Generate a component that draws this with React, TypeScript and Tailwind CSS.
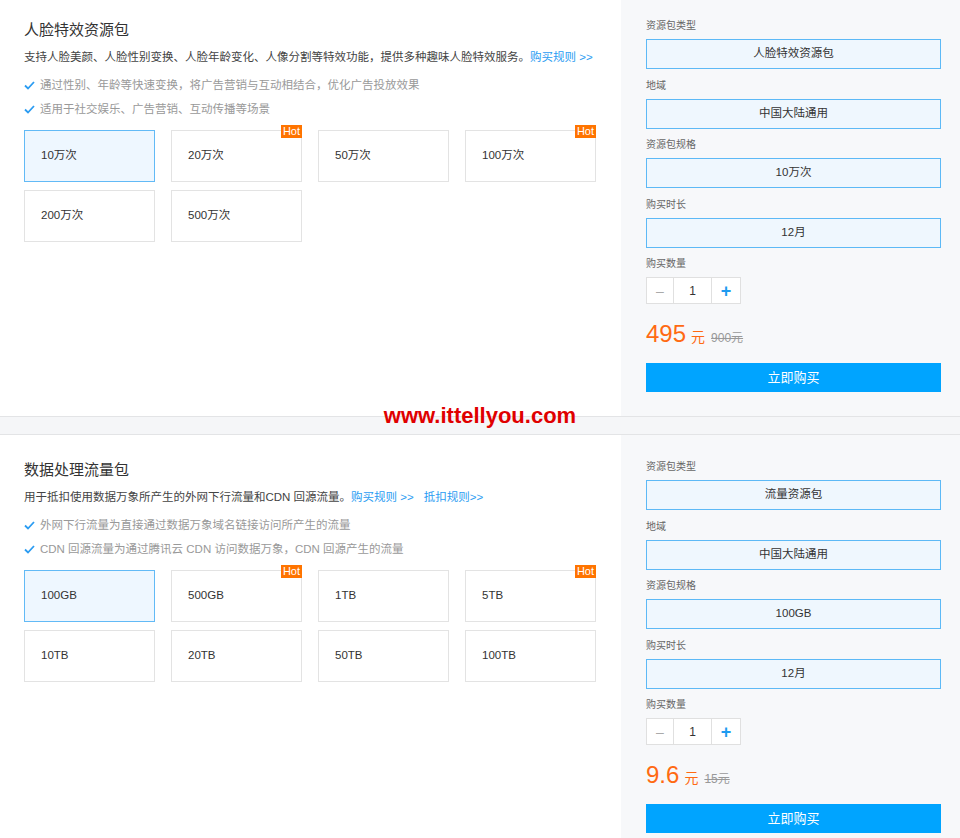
import { Fragment } from "react";

const FONT = { fontFamily: '"Liberation Sans", "Noto Sans CJK SC", sans-serif' };

type Pack = {
  title: string;
  desc: string;
  links: string[];
  points: string[];
  options: { label: string; hot?: boolean }[];
  type: string;
  spec: string;
  price: string;
  origin: string;
};

const PACKS: Pack[] = [
  {
    title: "人脸特效资源包",
    desc: "支持人脸美颜、人脸性别变换、人脸年龄变化、人像分割等特效功能，提供多种趣味人脸特效服务。",
    links: ["购买规则 >>"],
    points: [
      "通过性别、年龄等快速变换，将广告营销与互动相结合，优化广告投放效果",
      "适用于社交娱乐、广告营销、互动传播等场景",
    ],
    options: [
      { label: "10万次" },
      { label: "20万次", hot: true },
      { label: "50万次" },
      { label: "100万次", hot: true },
      { label: "200万次" },
      { label: "500万次" },
    ],
    type: "人脸特效资源包",
    spec: "10万次",
    price: "495",
    origin: "900元",
  },
  {
    title: "数据处理流量包",
    desc: "用于抵扣使用数据万象所产生的外网下行流量和CDN 回源流量。",
    links: ["购买规则 >>", "抵扣规则>>"],
    points: [
      "外网下行流量为直接通过数据万象域名链接访问所产生的流量",
      "CDN 回源流量为通过腾讯云 CDN 访问数据万象，CDN 回源产生的流量",
    ],
    options: [
      { label: "100GB" },
      { label: "500GB", hot: true },
      { label: "1TB" },
      { label: "5TB", hot: true },
      { label: "10TB" },
      { label: "20TB" },
      { label: "50TB" },
      { label: "100TB" },
    ],
    type: "流量资源包",
    spec: "100GB",
    price: "9.6",
    origin: "15元",
  },
];

function Check() {
  return (
    <svg width="11" height="9" viewBox="0 0 11 9" className="mr-[5px] shrink-0">
      <path d="M1 4.5 L4 7.5 L10 1" fill="none" stroke="#2b9cf2" strokeWidth="1.8" />
    </svg>
  );
}

function Field({ label, value }: { label: string; value: string }) {
  return (
    <div className="mb-[9.5px]">
      <div className="h-[14px] text-[10px] leading-[14px] text-[#666]">{label}</div>
      <div className="mt-[6px] flex h-[30px] items-center justify-center border border-[#5db9f6] bg-[#eff7fe] text-[11.5px] text-[#333]">
        {value}
      </div>
    </div>
  );
}

function Section({ pack, first }: { pack: Pack; first: boolean }) {
  return (
    <section className={first ? "flex h-[416px]" : "flex h-[403px]"}>
      <div className={first ? "flex-1 bg-white pl-6 pt-5" : "flex-1 bg-white pl-6 pt-[25px]"}>
        <h2 className="text-[15px] leading-5 text-[#333]">{pack.title}</h2>
        <p className="mt-2 text-[11.5px] leading-[18px] text-[#444]">
          {pack.desc}
          {pack.links.map((l, i) => (
            <Fragment key={l}>
              <span className="text-[#2b9cf2]">{l}</span>
              {i < pack.links.length - 1 && <span className="inline-block w-[10px]" />}
            </Fragment>
          ))}
        </p>
        <div className="mt-[10px] flex flex-col gap-[6px]">
          {pack.points.map((p) => (
            <div key={p} className="flex items-center text-[11.5px] leading-[18px] text-[#999]">
              <Check />
              {p}
            </div>
          ))}
        </div>
        <div className="mt-3 grid w-[572px] grid-cols-4 gap-x-4 gap-y-2">
          {pack.options.map((o, i) => (
            <div
              key={o.label}
              className={
                i === 0
                  ? "relative flex h-[52px] items-center border border-[#62baf6] bg-[#eef7ff] pl-4 text-[11.5px] text-[#333]"
                  : "relative flex h-[52px] items-center border border-[#e3e3e3] bg-white pl-4 text-[11.5px] text-[#333]"
              }
            >
              {o.label}
              {o.hot && (
                <span className="absolute -right-px top-[-6px] bg-[#ff7400] px-[2px] text-[11px] leading-[13px] text-white">
                  Hot
                </span>
              )}
            </div>
          ))}
        </div>
      </div>
      <div className={first ? "w-[339px] bg-[#f7f8fa] pl-[25px] pr-[19px] pt-[19px]" : "w-[339px] bg-[#f7f8fa] pl-[25px] pr-[19px] pt-[25px]"}>
        <Field label="资源包类型" value={pack.type} />
        <Field label="地域" value="中国大陆通用" />
        <Field label="资源包规格" value={pack.spec} />
        <Field label="购买时长" value="12月" />
        <div className="h-[14px] text-[10px] leading-[14px] text-[#666]">购买数量</div>
        <div className="mt-[6px] flex h-[27px] w-[95px] border border-[#e0e0e0] bg-white">
          <div className="flex w-[27px] items-center justify-center border-r border-[#e0e0e0] text-sm text-[#aaa]">
            –
          </div>
          <div className="flex w-[38px] items-center justify-center border-r border-[#e0e0e0] text-xs text-[#333]">
            1
          </div>
          <div className="flex flex-1 items-center justify-center text-lg font-bold text-[#1e9bf0]">+</div>
        </div>
        <div className="mt-[15px] flex h-[30px] items-baseline leading-[30px]">
          <span className="text-[24px] text-[#ff6a12]">{pack.price}</span>
          <span className="ml-[5px] text-[14px] text-[#ff6a12]">元</span>
          <span className="ml-[6px] text-xs text-[#999] line-through">{pack.origin}</span>
        </div>
        <button className="mt-[14px] flex h-[29px] w-full items-center justify-center bg-[#00a4ff] text-[13px] text-white">
          立即购买
        </button>
      </div>
    </section>
  );
}

export default function App() {
  return (
    <div className="relative h-[838px] w-[960px] overflow-hidden bg-white" style={FONT}>
      <Section pack={PACKS[0]} first />
      <div className="h-[19px] border-y border-[#e3e4e6] bg-[#f5f6f8]" />
      <Section pack={PACKS[1]} first={false} />
      <div
        className="absolute left-0 right-0 top-[405px] text-center text-[22px] font-bold leading-[22px] text-[#e00000]"
        style={{ fontFamily: '"Liberation Sans", Arial, sans-serif' }}
      >
        www.ittellyou.com
      </div>
    </div>
  );
}
